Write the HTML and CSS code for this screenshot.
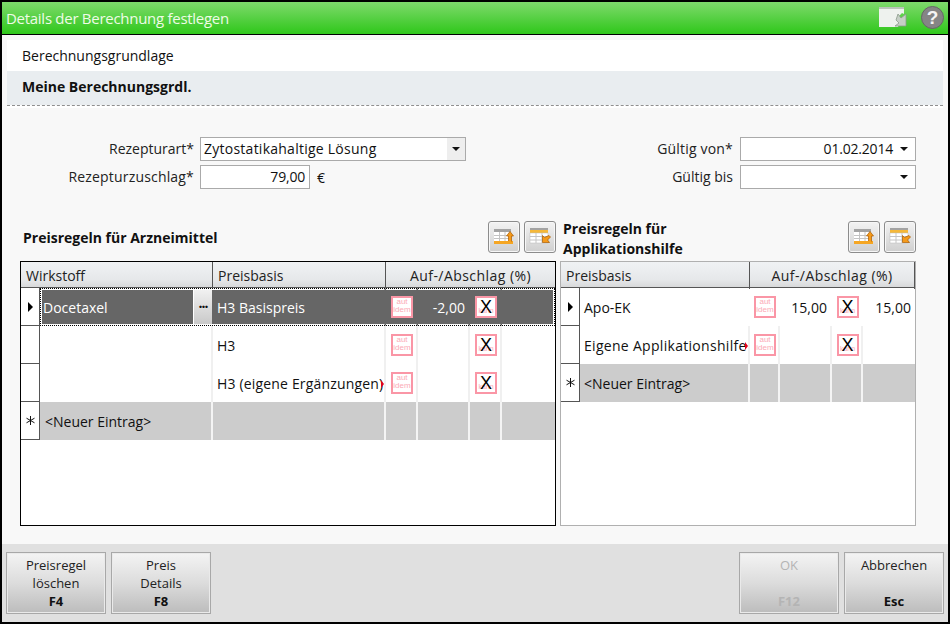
FILE: index.html
```html
<!DOCTYPE html>
<html lang="de">
<head>
<meta charset="utf-8">
<title>Details der Berechnung festlegen</title>
<link rel="stylesheet" href="styles.css">
</head>
<body>
<svg class="defs" width="0" height="0" aria-hidden="true">
  <symbol id="tbl-a" viewBox="0 0 22 20">
    <rect x="1" y="2" width="17" height="3" fill="#a3a3a3"/>
    <rect x="1" y="5" width="17" height="10" fill="#fff"/>
    <path d="M1 8.500h17M1 11.500h17M6.500 5v9M12 5v9" stroke="#c4c4c4" fill="none"/>
    <rect x="1" y="14" width="19" height="3" fill="#f5a623"/>
    <path d="M18.500 14.500V9h2l-3.500-4.500L13.500 9h2v5" fill="#f59a1a" stroke="#a85a00" stroke-width="0.700"/>
  </symbol>
  <symbol id="tbl-b" viewBox="0 0 22 20">
    <rect x="1" y="1" width="18" height="2" fill="#a3a3a3"/>
    <rect x="1" y="3" width="18" height="3" fill="#f5b83a"/>
    <rect x="1" y="6" width="18" height="10" fill="#fff" stroke="#bbb" stroke-width="0.500"/>
    <path d="M1 9.500h18M1 13h18M7 6v10M13 6v10" stroke="#c4c4c4" fill="none"/>
    <path d="M20 8.500l1.500 1.500-3 3 2 2.500h-7v-7l2 2z" fill="#f59a1a" stroke="#a85a00" stroke-width="0.700"/>
  </symbol>
  <symbol id="asterisk" viewBox="0 0 9 9">
    <path d="M4.500 0v9M0.500 2.200l8 4.600M0.500 6.800l8-4.600" stroke="#111" stroke-width="1" fill="none"/>
  </symbol>
</svg>
<div class="window">
  <header class="titlebar">
    <h1 class="title">Details der Berechnung festlegen</h1>
    <svg class="title-icon" width="28" height="20" viewBox="0 0 28 20" aria-hidden="true">
      <path d="M0 0h25v7l-2-1-5 5 3 4-2 5H0z" fill="#eef2ee"/>
      <path d="M0 0h25v2H0z" fill="#b9c4b9"/>
      <path d="M19 7l3 4 5-4v12H16l4-3-3-3z" fill="#c6cfc6" stroke="#8c9a8c" stroke-width="0.800"/>
    </svg>
    <span class="help">?</span>
  </header>
  <main class="content">
    <div class="crumb">Berechnungsgrundlage</div>
    <div class="subject">Meine Berechnungsgrdl.</div>
    <section class="form">
      <div class="fields fields-left">
        <label class="lbl">Rezepturart*</label>
        <div class="box select-main"><span class="val val-wide">Zytostatikahaltige Lösung</span><span class="drop drop-grey"><i class="tri"></i></span></div>
        <label class="lbl lbl-wide">Rezepturzuschlag*</label>
        <div class="amount"><div class="box input-num"><span class="val val-r val-pad">79,00</span></div><span class="unit">€</span></div>
      </div>
      <div class="fields fields-right">
        <label class="lbl lbl-wide">Gültig von*</label>
        <div class="box select-date"><span class="val val-r">01.02.2014</span><span class="drop"><i class="tri"></i></span></div>
        <label class="lbl">Gültig bis</label>
        <div class="box select-date"><span class="val val-r"></span><span class="drop"><i class="tri"></i></span></div>
      </div>
    </section>
    <section class="tables">
      <div class="panel panel-left">
        <div class="panel-head">
          <h2 class="panel-title single">Preisregeln für Arzneimittel</h2>
          <div class="tools">
            <button class="tool"><svg width="22" height="20"><use href="#tbl-a"/></svg></button>
            <button class="tool"><svg width="22" height="20"><use href="#tbl-b"/></svg></button>
          </div>
        </div>
        <div class="grid grid-left">
          <div class="ghead ghead-left">
            <div class="hc">Wirkstoff</div>
            <div class="hc">Preisbasis</div>
            <div class="hc hc-c">Auf-/Abschlag (%)</div>
          </div>
          <div class="row row-l selected">
            <div class="rh"><i class="cur"></i></div>
            <div class="c c-first">Docetaxel<span class="dots">···</span></div>
            <div class="c">H3 Basispreis</div>
            <div class="c c-i"><span class="aut">aut<br>idem</span></div>
            <div class="c c-n">-2,00</div>
            <div class="c c-i"><span class="aut x">kann<b>X</b></span></div>
            <div class="c c-e"></div>
          </div>
          <div class="row row-l">
            <div class="rh"></div>
            <div class="c"></div>
            <div class="c">H3</div>
            <div class="c c-i"><span class="aut">aut<br>idem</span></div>
            <div class="c c-n"></div>
            <div class="c c-i"><span class="aut x">kann<b>X</b></span></div>
            <div class="c c-e"></div>
          </div>
          <div class="row row-l">
            <div class="rh"></div>
            <div class="c"></div>
            <div class="c c-clip c-clip-s">H3 (eigene Ergänzungen)</div>
            <div class="c c-i"><span class="aut">aut<br>idem</span></div>
            <div class="c c-n"></div>
            <div class="c c-i"><span class="aut x">kann<b>X</b></span></div>
            <div class="c c-e"></div>
          </div>
          <div class="row row-l newrow">
            <div class="rh"><svg width="9" height="9"><use href="#asterisk"/></svg></div>
            <div class="c c-new">&lt;Neuer Eintrag&gt;</div>
            <div class="c"></div>
            <div class="c c-i"></div>
            <div class="c c-n"></div>
            <div class="c c-i"></div>
            <div class="c c-e"></div>
          </div>
        </div>
      </div>
      <div class="panel panel-right">
        <div class="panel-head">
          <h2 class="panel-title">Preisregeln für<br>Applikationshilfe</h2>
          <div class="tools">
            <button class="tool"><svg width="22" height="20"><use href="#tbl-a"/></svg></button>
            <button class="tool"><svg width="22" height="20"><use href="#tbl-b"/></svg></button>
          </div>
        </div>
        <div class="grid grid-right">
          <div class="ghead ghead-right">
            <div class="hc">Preisbasis</div>
            <div class="hc hc-c">Auf-/Abschlag (%)</div>
          </div>
          <div class="row row-r current">
            <div class="rh"><i class="cur"></i></div>
            <div class="c">Apo-EK</div>
            <div class="c c-i"><span class="aut">aut<br>idem</span></div>
            <div class="c c-n">15,00</div>
            <div class="c c-i"><span class="aut x">kann<b>X</b></span></div>
            <div class="c c-n c-last">15,00</div>
          </div>
          <div class="row row-r">
            <div class="rh"></div>
            <div class="c c-clip">Eigene Applikationshilfe</div>
            <div class="c c-i"><span class="aut">aut<br>idem</span></div>
            <div class="c c-n"></div>
            <div class="c c-i"><span class="aut x">kann<b>X</b></span></div>
            <div class="c c-n c-last"></div>
          </div>
          <div class="row row-r newrow">
            <div class="rh"><svg width="9" height="9"><use href="#asterisk"/></svg></div>
            <div class="c c-new-r">&lt;Neuer Eintrag&gt;</div>
            <div class="c c-i"></div>
            <div class="c c-n"></div>
            <div class="c c-i"></div>
            <div class="c c-n c-last"></div>
          </div>
        </div>
      </div>
    </section>
  </main>
  <footer class="footer">
    <button class="fbtn"><span>Preisregel</span><span>löschen</span><b>F4</b></button>
    <button class="fbtn"><span>Preis</span><span>Details</span><b>F8</b></button>
    <button class="fbtn fbtn-off push"><span>OK</span><span></span><b>F12</b></button>
    <button class="fbtn"><span>Abbrechen</span><span></span><b>Esc</b></button>
  </footer>
</div>
</body>
</html>
```
FILE: styles.css
```css
* { box-sizing: border-box; }
html, body { margin: 0; padding: 0; }
body {
  width: 950px;
  height: 624px;
  overflow: hidden;
  background: #000;
  font-family: "Open Sans", "Noto Sans", sans-serif;
  font-size: 14px;
  color: #111;
}
.defs { position: absolute; }
.window {
  width: 950px;
  height: 624px;
  border: 2px solid #000;
  display: flex;
  flex-direction: column;
}
.titlebar {
  height: 33px;
  flex: none;
  border-bottom: 1px solid #000;
  background: linear-gradient(#7ed96c, #5fd24c 40%, #2fc71a);
  display: flex;
  align-items: center;
  padding: 0 4px 0 4px;
}
.title {
  margin: 0;
  font-size: 15px;
  font-weight: 400;
  letter-spacing: -0.28px;
  color: #eefbe6;
  flex: 1;
}
.title-icon { margin-right: 14px; margin-top: -2px; }
.help {
  width: 23px;
  height: 23px;
  border-radius: 50%;
  background: #858585;
  border: 1px solid #666;
  color: #f4f4f4;
  font: 700 19px/21px "Liberation Sans", sans-serif;
  text-align: center;
  margin-top: -2px;
}
.content {
  flex: 1;
  background: #f8f8f8;
  padding: 5px 5px 0;
  min-height: 0;
}
.crumb {
  height: 31px;
  background: #fff;
  padding-left: 15px;
  line-height: 31px;
}
.subject {
  height: 37px;
  background: #e9edf0;
  border-bottom: 3px solid #fff;
  position: relative;
  padding-left: 15px;
  line-height: 32px;
  font-weight: 700;
}
.subject::after {
  content: "";
  position: absolute;
  left: 0;
  right: 0;
  bottom: -1px;
  border-top: 1px dashed #8f8f8f;
}
.form {
  margin-top: 29px;
  padding-right: 27px;
  display: flex;
  justify-content: space-between;
}
.fields {
  display: grid;
  row-gap: 4px;
  align-items: center;
}
.fields-left { grid-template-columns: 187px 266px; column-gap: 6px; }
.fields-right { grid-template-columns: auto 176px; column-gap: 7px; }
.lbl { text-align: right; line-height: 24px; color: #222; }
.lbl-wide { letter-spacing: 0.18px; }
.box {
  height: 24px;
  border: 1px solid #aaa;
  background: #fff;
  display: flex;
  align-items: center;
  line-height: 22px;
}
.val { flex: 1; padding-left: 3px; white-space: nowrap; }
.val-wide { letter-spacing: 0.25px; }
.val-r { text-align: right; padding: 0; letter-spacing: -0.2px; }
.val-pad { padding-right: 4px; }
.amount { display: flex; align-items: center; }
.input-num { width: 110px; }
.unit { margin-left: 7px; }
.drop {
  width: 22px;
  height: 22px;
  display: flex;
  align-items: center;
  justify-content: center;
}
.drop-grey { width: 18px; background: #eee; }
.tri {
  width: 0;
  height: 0;
  border-left: 4px solid transparent;
  border-right: 4px solid transparent;
  border-top: 4px solid #111;
}
.tables {
  margin-top: 30px;
  padding-left: 13px;
  display: flex;
  gap: 4px;
}
.panel-left { width: 536px; }
.panel-right { width: 356px; }
.panel-head {
  height: 42px;
  display: flex;
  justify-content: space-between;
}
.panel-title {
  margin: 0 0 0 3px;
  font-size: 14px;
  font-weight: 700;
  line-height: 20px;
}
.panel-title.single { margin-left: 3px; padding-top: 9px; }
.tools { display: flex; gap: 4px; padding-top: 2px; }
.tool {
  width: 32px;
  height: 32px;
  padding: 0;
  border: 1px solid #8c8c8c;
  border-radius: 3px;
  background: linear-gradient(#f3f3f3, #cfcfcf);
  box-shadow: inset 0 0 0 1px #f7f7f7;
  display: flex;
  align-items: center;
  justify-content: center;
}
.grid {
  height: 265px;
  background: #fff;
  border: 1px solid #000;
}
.grid-right { border-color: #b0b0b0; }
.ghead {
  height: 26px;
  display: grid;
  border-bottom: 1px solid #555;
  background: linear-gradient(#f0f2f4, #e6e8ea 70%, #d8d9da);
}
.ghead-left { grid-template-columns: 192px 173px 169px; }
.ghead-right { grid-template-columns: 189px 165px; }
.hc {
  padding-left: 5px;
  line-height: 27px;
  border-right: 1px solid #555;
  color: #222;
}
.hc-c {
  padding-left: 0;
  text-align: center;
  border-right: 0;
  letter-spacing: 0.45px;
}
.grid-right .hc-c { border-right: 1px solid #555; }
.row {
  height: 38px;
  display: grid;
  align-items: stretch;
  line-height: 39px;
}
.row-l { grid-template-columns: 19px 173px 173px 32px 52px 32px 53px; }
.row-r { grid-template-columns: 19px 170px 30px 52px 31px 52px; }
.c {
  border-right: 2px solid #f0f0f0;
  padding-left: 4px;
  white-space: nowrap;
  overflow: hidden;
  position: relative;
}
.c-e, .c-last { border-right: 0; }
.c-i {
  padding: 0 0 0 2px;
  display: flex;
  align-items: center;
  justify-content: center;
}
.c-n { padding: 0 3px 0 0; text-align: right; }
.c-last { padding-right: 4px; }
.c-new { padding-left: 5px; }
.c-new-r { padding-left: 4px; }
.rh {
  border-right: 1px solid #555;
  border-bottom: 1px solid #555;
  display: flex;
  align-items: center;
  justify-content: center;
  background: #fff;
}
.cur {
  width: 0;
  height: 0;
  border-top: 5px solid transparent;
  border-bottom: 5px solid transparent;
  border-left: 5px solid #000;
}
.aut {
  width: 22px;
  height: 22px;
  border: 2px solid #fa96a6;
  background: #fff;
  color: #fbaab6;
  font: 400 8px/8px "Liberation Sans", sans-serif;
  text-align: center;
  position: relative;
  overflow: hidden;
  flex: none;
}
.aut.x { padding-top: 9px; font-size: 7px; }
.aut b {
  position: absolute;
  left: 0;
  right: 0;
  top: 0;
  font: 400 18px/18px "Liberation Sans", sans-serif;
  color: #000;
}
.current .c { border-right-color: transparent; }
.c-clip { letter-spacing: 0.3px; }
.c-clip-s { letter-spacing: 0.17px; }
.c-clip::after {
  content: "";
  position: absolute;
  right: 0;
  top: 16px;
  border-top: 4px solid transparent;
  border-bottom: 4px solid transparent;
  border-left: 3px solid #e3001b;
}
.newrow .c { background: #ccc; border-right-color: #f4f4f4; }
.selected { position: relative; }
.selected .c {
  background: #666;
  color: #fff;
  border-right: 2px solid #666;
  border-top: 2px solid #fff;
  border-bottom: 2px solid #fff;
  line-height: 35px;
}
.selected .c-e { border-right: 2px solid #fff; }
.selected .c-first { border-left: 2px solid #fff; border-right: 0; padding-left: 1px; }
.selected::after {
  content: "";
  position: absolute;
  left: 19px;
  top: 0;
  right: 0;
  bottom: 0;
  border: 1px dotted #000;
  pointer-events: none;
}
.dots {
  position: absolute;
  right: 1px;
  top: -1px;
  width: 19px;
  height: 36px;
  background: linear-gradient(#f2f2f2, #c8c8c8);
  border-left: 1px solid #fff;
  color: #111;
  font-weight: 700;
  text-align: center;
  line-height: 36px;
  letter-spacing: -1px;
}
.footer {
  height: 78px;
  flex: none;
  background: #e0e0e0;
  padding: 8px 4px;
  display: flex;
  gap: 5px;
}
.fbtn {
  width: 100px;
  height: 62px;
  padding: 2px 0 0;
  border: 1px solid #a8a8a8;
  background: linear-gradient(#f4f4f4, #dcdcdc 50%, #bcbcbc);
  box-shadow: inset 0 0 0 1px #eaeaea;
  font: 13px "Open Sans", "Noto Sans", sans-serif;
  color: #222;
  display: grid;
  grid-template-rows: 19px 18px 18px;
  align-items: center;
  justify-items: center;
}
.fbtn b { color: #111; }
.fbtn-off, .fbtn-off b { color: #b4b4b4; }
.push { margin-left: auto; }
```
